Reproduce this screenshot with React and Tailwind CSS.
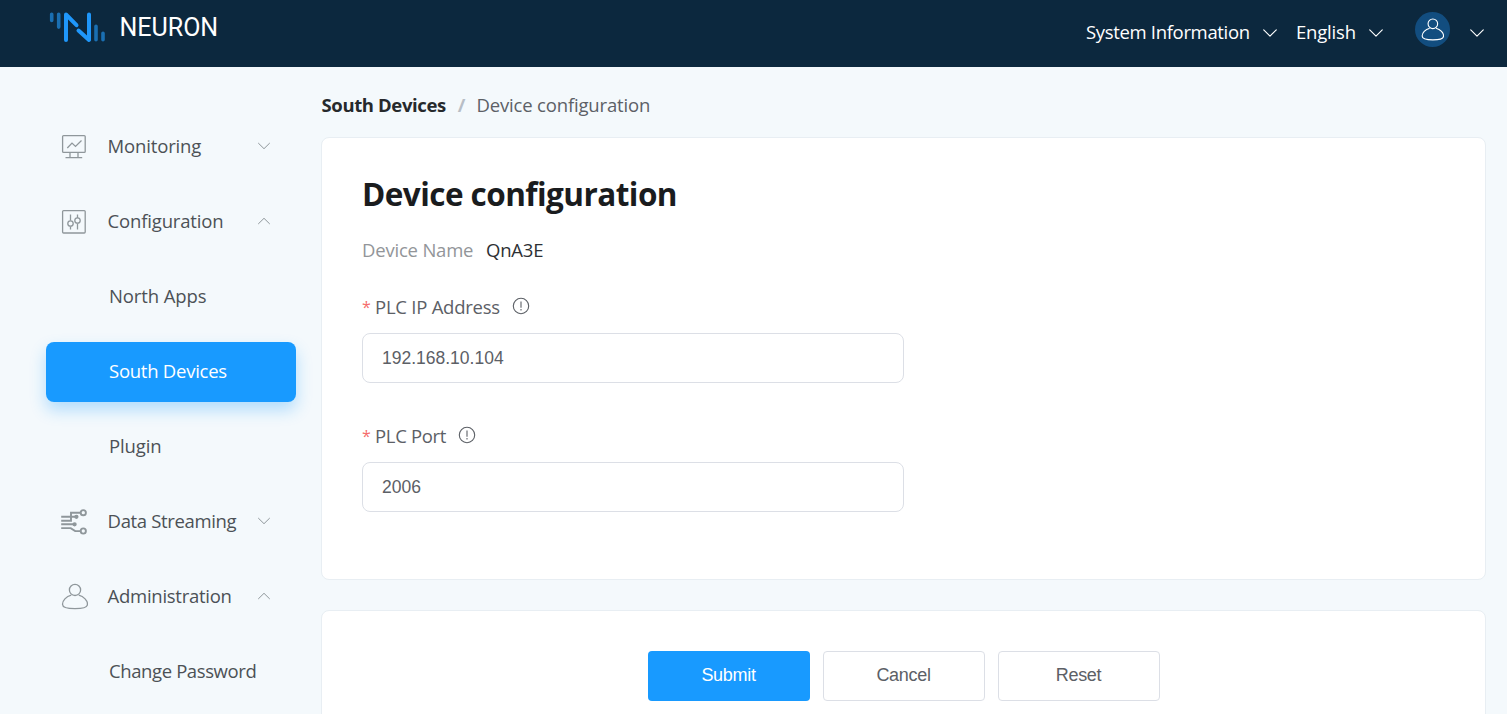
function Chevron({ up = false, className = "" }) {
  return (
    <svg viewBox="0 0 14 14" fill="none" stroke="currentColor" strokeLinecap="round" strokeLinejoin="round" className={`shrink-0 ${className}`}>
      <path d={up ? "M1.5 9.7 7 4.3l5.5 5.4" : "M1.5 4.3 7 9.7l5.5-5.4"} />
    </svg>
  );
}

function Logo() {
  return (
    <svg viewBox="0 0 58 34" fill="none" strokeLinecap="round" strokeLinejoin="round" className="mb-[2px] h-[34px] w-[58px] shrink-0">
      <g stroke="#1a6fb2" strokeWidth="3.6">
        <path d="M3.700 5.300v6.200M10.700 5.300v12.800M48 17.200v13.500M55 24.200v6.500" />
      </g>
      <g stroke="#1f97fb" strokeWidth="4">
        <path d="M18 31V5.500l10.500 10.700M30.500 21.500 41 31V5.500" />
      </g>
    </svg>
  );
}

function MonitorIcon() {
  return (
    <svg viewBox="0 0 28 28" fill="none" stroke="#8f979b" strokeWidth="1.300" className="size-7">
      <rect x="2.600" y="3.600" width="22.600" height="16.800" rx="1" />
      <path d="M7.300 16 12 11.100l3.500 3.300 6-5.900M10 20.500v4.500M18 20.500v4.500M5.500 25.600h16.700" />
    </svg>
  );
}

function SlidersIcon() {
  return (
    <svg viewBox="0 0 28 28" fill="none" stroke="#8f979b" strokeWidth="1.300" className="size-7">
      <rect x="2.600" y="3.600" width="22.600" height="22.400" rx="1" />
      <path d="M10.500 7.500v6M10.500 19.500v3M17.500 7.500v3.500M17.500 16.500v6" />
      <circle cx="10.500" cy="16.500" r="2.700" />
      <circle cx="17.500" cy="13.500" r="2.700" />
    </svg>
  );
}

function StreamIcon() {
  return (
    <svg viewBox="0 0 28 28" fill="none" stroke="#8f979b" strokeWidth="1.900" className="size-7">
      <path d="M1.200 9.800h15M1.200 13.700h9.800V5.700h9M1.200 17.300h13M1.200 21.100h9.500l4.500 3h5" />
      <circle cx="23.300" cy="5.700" r="2.600" />
      <circle cx="23.300" cy="24" r="2.600" />
      <circle cx="16.400" cy="9.800" r="1.200" fill="#8f979b" />
      <circle cx="14.600" cy="17.300" r="1.200" fill="#8f979b" />
    </svg>
  );
}

function UserIcon({ className = "" }) {
  return (
    <svg viewBox="0 0 28 28" fill="none" stroke="currentColor" strokeWidth="1.300" className={className}>
      <circle cx="15" cy="7.900" r="5.600" />
      <path d="M11.300 13.200C6 14.500 2.500 18.700 2.500 22.200c0 3.700 5.300 4.500 12.500 4.500s12.500-.8 12.500-4.500c0-3.500-3.500-7.700-8.800-9" />
    </svg>
  );
}

function InfoIcon() {
  return (
    <svg viewBox="0 0 18 18" fill="none" stroke="#5c6066" strokeWidth="1.100" className="size-[18px] shrink-0">
      <circle cx="9" cy="9" r="7.700" />
      <path d="M9 4.500v6.300M9 12v1.400" />
    </svg>
  );
}

function MenuGroup({ icon, label, open, tracking }) {
  return (
    <div className="flex h-[60px] items-center pb-[2px] pl-[14px] pr-[25px]">
      {icon}
      <span className={`ml-[19.600px] flex-1 whitespace-nowrap ${tracking}`}>{label}</span>
      <Chevron up={open} className="size-[14px] text-[#8f979b]" />
    </div>
  );
}

function MenuItem({ label, active, tracking }) {
  return (
    <div className={`flex h-[60px] items-center whitespace-nowrap rounded-lg pb-[2px] pl-[63px] ${tracking} ${active ? "bg-[#189aff] text-white shadow-[0_8px_16px_rgba(24,154,255,0.3)]" : ""}`}>
      {label}
    </div>
  );
}

function Field({ label, value, tracking }) {
  return (
    <div>
      <label className="flex h-[26px] items-center text-[#5c6066]">
        <span className="w-[13px] text-[16px] text-[#f56c6c]">*</span>
        <span className={tracking}>{label}</span>
        <span className="ml-[12px] pb-[2px]"><InfoIcon /></span>
      </label>
      <input
        defaultValue={value}
        className="mt-[13px] block h-[50px] w-[542px] rounded-lg border border-[#dcdfe6] bg-white px-[19px] font-['Liberation_Sans',sans-serif] text-[17.500px] text-[#5c6066] outline-none"
      />
    </div>
  );
}

export default function App() {
  return (
    <div className="flex h-[714px] w-full flex-col overflow-hidden bg-[#f4f9fc] font-['Open_Sans','Noto_Sans',sans-serif] text-[18.500px] text-[#4c5156]">
      <header className="flex h-[67px] shrink-0 items-center bg-[#0c283e] pl-[48px] pr-[22px] text-white">
        <div className="flex items-center pb-[13px]">
          <Logo />
          <span className="ml-[13.500px] font-['Roboto',sans-serif] text-[25px] leading-none">NEURON</span>
        </div>
        <div className="ml-auto flex items-center pb-[2px]">
          <span className="w-[164px] whitespace-nowrap pb-[2px] tracking-[-0.330px]">System Information</span>
          <Chevron className="ml-[12px] size-4" />
          <span className="ml-[18px] w-[60px] whitespace-nowrap pb-[2px] tracking-[-0.200px]">English</span>
          <Chevron className="ml-[12px] size-4" />
          <div className="mb-[7px] ml-[31px] flex size-[35px] items-center justify-center rounded-full bg-[#124d7f]">
            <UserIcon className="mb-px mr-px size-[24px]" />
          </div>
          <Chevron className="ml-[19px] size-4" />
        </div>
      </header>
      <div className="flex min-h-0 flex-1">
        <aside className="flex w-[321px] shrink-0 flex-col gap-[15px] pl-[46px] pr-[25px] pt-[50px]">
          <MenuGroup icon={<MonitorIcon />} label="Monitoring" tracking="tracking-[-0.160px]" />
          <MenuGroup icon={<SlidersIcon />} label="Configuration" tracking="tracking-[-0.170px]" open />
          <MenuItem label="North Apps" tracking="tracking-[-0.100px]" />
          <MenuItem label="South Devices" tracking="tracking-[-0.250px]" active />
          <MenuItem label="Plugin" tracking="tracking-[-0.140px]" />
          <MenuGroup icon={<StreamIcon />} label="Data Streaming" tracking="tracking-[-0.350px]" />
          <MenuGroup icon={<UserIcon className="size-7 text-[#8f979b]" />} label="Administration" tracking="tracking-[-0.270px]" open />
          <MenuItem label="Change Password" tracking="tracking-[-0.390px]" />
        </aside>
        <main className="flex w-[1165px] shrink-0 flex-col">
          <nav className="flex h-[70px] shrink-0 items-center pl-[0.500px] pt-[5px]">
            <span className="w-[125px] whitespace-nowrap font-bold tracking-[-0.380px] text-[#26292c]">South Devices</span>
            <span className="w-[30px] text-center font-bold text-[#b8bec6]">/</span>
            <span className="whitespace-nowrap tracking-[-0.170px] text-[#5c6066]">Device configuration</span>
          </nav>
          <section className="h-[443px] shrink-0 rounded-lg border border-[#e8eef3] bg-white pl-[40px] pt-[34px]">
            <h1 className="h-[44px] whitespace-nowrap text-[31.500px] font-bold leading-[44px] tracking-[-0.550px] text-[#1a1c1e]">Device configuration</h1>
            <div className="mb-[31px] mt-[21px] flex h-[26px] items-center">
              <span className="w-[124px] tracking-[-0.200px] text-[#929599]">Device Name</span>
              <span className="tracking-[-0.200px] text-[#2d3034]">QnA3E</span>
            </div>
            <div className="flex flex-col gap-[40px]">
              <Field label="PLC IP Address" value="192.168.10.104" tracking="tracking-[-0.240px]" />
              <Field label="PLC Port" value="2006" tracking="tracking-[-0.320px]" />
            </div>
          </section>
          <section className="mt-[30px] flex h-[140px] shrink-0 justify-center gap-[13px] rounded-lg border border-[#e8eef3] bg-white pt-[40px] font-['Liberation_Sans',sans-serif] text-[18px] text-[#5c6066]">
            <button className="h-[50px] w-[162px] rounded bg-[#189aff] pb-[2px] tracking-[-0.300px] text-white">Submit</button>
            <button className="h-[50px] w-[162px] rounded border border-[#dcdfe6] bg-white pb-[2px] tracking-[-0.300px]">Cancel</button>
            <button className="h-[50px] w-[162px] rounded border border-[#dcdfe6] bg-white pb-[2px] tracking-[-0.300px]">Reset</button>
          </section>
        </main>
      </div>
    </div>
  );
}
